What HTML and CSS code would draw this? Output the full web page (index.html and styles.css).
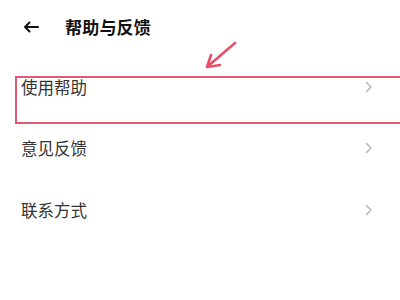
FILE: index.html
```html
<!DOCTYPE html>
<html lang="zh">
<head>
<meta charset="utf-8">
<link rel="stylesheet" href="styles.css">
</head>
<body>
<div class="page">
  <header class="header">
    <svg class="back" width="16" height="12" viewBox="0 0 16 12"><path d="M15 6H2M6.5 1.5L2 6l4.5 4.5" fill="none" stroke="#111" stroke-width="2" stroke-linecap="round" stroke-linejoin="round"/></svg>
    <h1 class="title">帮助与反馈</h1>
  </header>
  <ul class="list">
    <li class="row"><span class="label">使用帮助</span><svg class="chev" width="8" height="12" viewBox="0 0 8 12"><path d="M1.5 1.5L6 6l-4.5 4.5" fill="none" stroke="#b8b8b8" stroke-width="1.6" stroke-linecap="round" stroke-linejoin="round"/></svg></li>
    <li class="row"><span class="label">意见反馈</span><svg class="chev" width="8" height="12" viewBox="0 0 8 12"><path d="M1.5 1.5L6 6l-4.5 4.5" fill="none" stroke="#b8b8b8" stroke-width="1.6" stroke-linecap="round" stroke-linejoin="round"/></svg></li>
    <li class="row"><span class="label">联系方式</span><svg class="chev" width="8" height="12" viewBox="0 0 8 12"><path d="M1.5 1.5L6 6l-4.5 4.5" fill="none" stroke="#b8b8b8" stroke-width="1.6" stroke-linecap="round" stroke-linejoin="round"/></svg></li>
  </ul>
  <div class="highlight"></div>
  <svg class="pointer" width="40" height="36" viewBox="0 0 40 36"><path d="M35 3L7 27M7 27L11 15M7 27L20 25" fill="none" stroke="#e8506a" stroke-width="2.6" stroke-linecap="round" stroke-linejoin="round"/></svg>
</div>
</body>
</html>
```
FILE: styles.css
```css
html, body {
  margin: 0;
  padding: 0;
  background: #fff;
}
.page {
  position: relative;
  width: 400px;
  height: 300px;
  overflow: hidden;
  font-family: "Noto Sans CJK SC", "Noto Sans", sans-serif;
  color: #333;
}
.header {
  height: 56px;
  display: flex;
  align-items: center;
  padding-left: 23px;
  padding-bottom: 3px;
  box-sizing: border-box;
}
.back {
  display: block;
}
.title {
  margin: 0 0 0 26px;
  font-size: 17px;
  font-weight: 700;
  color: #111;
  letter-spacing: 0.2px;
}
.list {
  list-style: none;
  margin: 0;
  padding: 0;
}
.row {
  height: 61.5px;
  display: flex;
  align-items: center;
  justify-content: space-between;
  padding: 0 27px 0 21px;
}
.label {
  font-size: 16.5px;
  color: #333;
}
.chev {
  display: block;
}
.highlight {
  position: absolute;
  left: 15px;
  top: 76px;
  width: 400px;
  height: 48px;
  border: 2px solid #e25a72;
  box-sizing: border-box;
}
.pointer {
  position: absolute;
  left: 200px;
  top: 40px;
}
```
